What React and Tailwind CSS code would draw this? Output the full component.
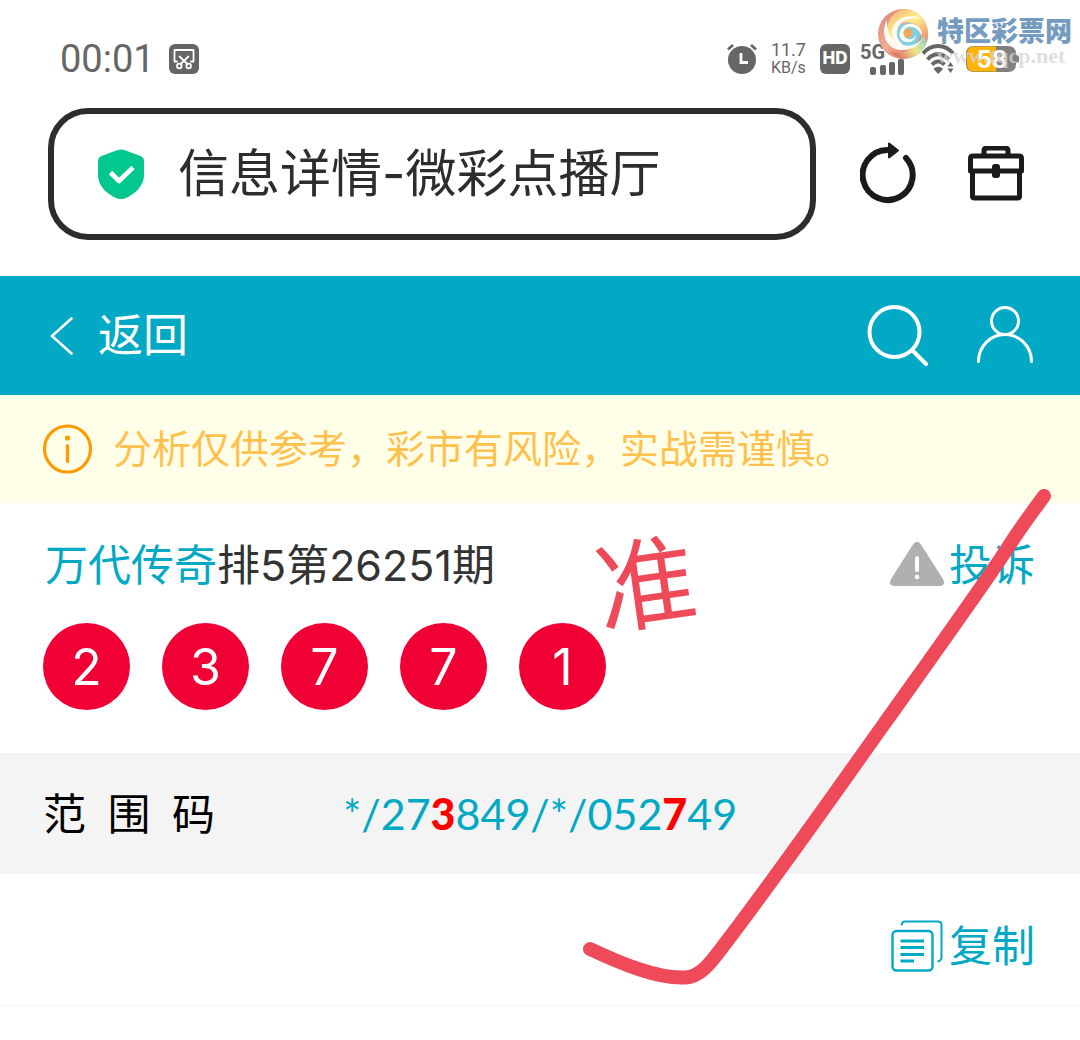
import React from "react";

function ScissorsBadge() {
  return (
    <svg viewBox="0 0 30 30" className="size-[30px]" aria-hidden="true">
      <rect width="30" height="30" rx="6" fill="#666" />
      <g fill="none" stroke="#fff" strokeWidth="1.8" strokeLinecap="round" strokeLinejoin="round">
        <path d="M8 17.500H5.500V6h19v11.500H22" />
        <path d="M10.500 12.500l8 7.500M19.500 12.500l-8 7.500" />
        <circle cx="10.300" cy="22" r="2.300" />
        <circle cx="19.700" cy="22" r="2.300" />
      </g>
    </svg>
  );
}

function AlarmIcon() {
  return (
    <svg viewBox="0 0 30 32" className="h-8 w-[30px]" aria-hidden="true">
      <circle cx="15" cy="17" r="14" fill="#666" />
      <path d="M1 6.500l5-4.500M29 6.500l-5-4.500" stroke="#666" strokeWidth="2.800" />
      <path d="M14 10v9.500h7" fill="none" stroke="#fff" strokeWidth="2.800" />
    </svg>
  );
}

function SignalIcon() {
  return (
    <svg viewBox="0 0 48 34" className="h-[34px] w-12" aria-hidden="true">
      <g fill="#666">
        <text x="0" y="17" fontFamily="Roboto, sans-serif" fontWeight="700" fontSize="20">5G</text>
        <rect x="10" y="25" width="6" height="8" rx="2" />
        <rect x="20" y="23" width="6" height="10" rx="2" />
        <rect x="29" y="20" width="6" height="13" rx="2" />
        <rect x="38" y="17" width="6" height="16" rx="2" />
      </g>
    </svg>
  );
}

function WifiIcon() {
  return (
    <svg viewBox="0 0 34 30" className="h-[30px] w-[34px]" aria-hidden="true">
      <g fill="none" stroke="#666" strokeWidth="3.800">
        <path d="M1 9.500C9-.5 23-.5 31 9.500" />
        <path d="M5.500 15.500c6-7 15-7 21 0" />
        <path d="M10 20.800c4-4.500 8.500-4.500 12.500 0" />
      </g>
      <path d="M11.500 25c3-3 6.500-3 9.500 0L16.200 30z" fill="#666" />
      <path d="M25.500 22.500l3-4.500 3 4.500zM25.500 24.500l3 4.500 3-4.500z" fill="#666" />
    </svg>
  );
}

function BatteryIcon() {
  return (
    <svg viewBox="0 0 54 28" className="h-7 w-[54px]" role="img" aria-label="58%">
      <path d="M8 1h34q8 0 8 8v1h1q2 0 2 2v4q0 2-2 2h-1v1q0 8-8 8H8q-8 0-8-8V9q0-8 8-8z" fill="#808080" />
      <path d="M8 1.500h22v25H8q-7 0-7-7.500V9q0-7.500 7-7.500z" fill="#ffb400" />
      <text x="26" y="23" textAnchor="middle" fontFamily="Inter, sans-serif" fontWeight="700" fontSize="24" fill="#fff">58</text>
    </svg>
  );
}

function OrbLogo() {
  return (
    <svg viewBox="0 0 52 52" className="size-[52px]" aria-hidden="true">
      <defs>
        <linearGradient id="shell" x1="0" y1="0.200" x2="0.700" y2="1">
          <stop offset="0" stopColor="#dd8d80" />
          <stop offset="0.500" stopColor="#f3ab92" />
          <stop offset="1" stopColor="#d97263" />
        </linearGradient>
        <linearGradient id="sun" x1="0.100" y1="0" x2="0.900" y2="1">
          <stop offset="0" stopColor="#f3b07c" />
          <stop offset="0.450" stopColor="#fdf08a" />
          <stop offset="1" stopColor="#ee8268" />
        </linearGradient>
        <linearGradient id="leaf" x1="0" y1="0.500" x2="1" y2="0">
          <stop offset="0" stopColor="#df7562" />
          <stop offset="0.500" stopColor="#ece88b" />
          <stop offset="1" stopColor="#86cdd3" />
        </linearGradient>
      </defs>
      <circle cx="26" cy="26" r="25" fill="url(#shell)" />
      <path d="M13 33C6 20 12 5 27 1c14 0 24 11 24 25 0 4-1 8-2.500 11C47 24 41 14 30 14c-11 0-16 8-13 19z" fill="url(#sun)" />
      <path d="M13 44c12 3 27-3 33-17 3 3 4 8 2 12-7 11-22 16-35 5z" fill="url(#leaf)" />
      <path d="M19 27c0-8 5-12 12-12 8 0 13 6 12 13-1 8-8 12-14 11-6-1-10-6-10-12z" fill="#7ed0e2" />
      <path d="M10 12C2 27 11 44 28 42c8-1 14-5 17-11-5 6-12 8-18 6C15 34 9 24 10 12z" fill="#fffaf2" />
      <path d="M45 11C31 4 16 11 15 24c0 8 6 15 14 15-6-4-10-9-9-15 1-11 13-16 25-13z" fill="#fffaf2" />
      <path d="M45 29c1-11-9-16-17-12-8 5-7 16 2 17 5 1 9-3 9-7-2 4-5 5-8 4-6-2-6-10 0-12 6-1 12 3 14 10z" fill="#fffaf2" />
      <circle cx="31" cy="25" r="4.500" fill="#f3a95c" />
    </svg>
  );
}

function Watermark() {
  return (
    <div className="absolute top-2 right-2 flex gap-2">
      <OrbLogo />
      <div className="flex flex-col">
        <span className="pt-[2px] text-[27px] leading-[44px] font-black text-[#759bbf]">特区彩票网</span>
        <span className="-mt-2 font-['Liberation_Serif',serif] text-[22px] leading-5 font-bold text-[#d4d4d4]/75">www.tqcp.net</span>
      </div>
    </div>
  );
}

function StatusBar() {
  return (
    <div className="relative flex h-[108px] items-center justify-between pt-[10px] pr-[60px] pl-[60px] text-[#666]">
      <div className="flex items-center gap-[14px]">
        <span className="font-['Roboto',sans-serif] text-[38px] leading-10">00:01</span>
        <ScissorsBadge />
      </div>
      <div className="flex items-center gap-[14px]">
        <AlarmIcon />
        <div className="flex flex-col font-['Roboto',sans-serif] leading-[18px]">
          <span className="text-[18px]">11.7</span>
          <span className="text-[16px]">KB/s</span>
        </div>
        <div className="flex items-center gap-[10px]">
          <span className="flex size-[30px] items-center justify-center rounded-md bg-[#666] text-[17px] font-extrabold text-white">HD</span>
          <SignalIcon />
        </div>
        <div className="flex items-center gap-[10px]">
          <WifiIcon />
          <BatteryIcon />
        </div>
      </div>
      <Watermark />
    </div>
  );
}

function BrowserBar() {
  return (
    <div className="flex items-center pr-14 pb-9 pl-12">
      <div className="flex h-[132px] flex-1 items-center gap-[34px] rounded-[40px] border-6 border-[#2d2d2d] pl-11">
        <svg viewBox="0 0 46 50" className="h-[50px] w-[46px] shrink-0" aria-hidden="true">
          <path d="M19 1.200q4-1.600 8 0L42.500 7Q46 8.500 46 12v14c0 11-9 19-18.500 23.200q-4.500 1.700-9 0C9 45 0 37 0 26V12q0-3.500 3.500-5z" fill="#02c78f" />
          <path d="M12.500 23.500l8.500 8.500L35 18.500" fill="none" stroke="#fff" strokeWidth="4.600" strokeLinejoin="round" />
        </svg>
        <input
          aria-label="网址"
          readOnly
          value="信息详情-微彩点播厅"
          className="h-20 w-full min-w-0 flex-1 bg-transparent text-[51px] leading-[80px] text-[#2d2d2d] outline-none"
        />
      </div>
      <button aria-label="刷新" className="ml-11 shrink-0">
        <svg viewBox="0 0 56 64" className="h-16 w-14">
          <path d="M27 8A25 25 0 1 0 46 16" fill="none" stroke="#1b1b1b" strokeWidth="6" strokeLinecap="round" />
          <path d="M29 1.500l9 7-9 7z" fill="#1b1b1b" stroke="#1b1b1b" strokeWidth="2" strokeLinejoin="round" />
        </svg>
      </button>
      <button aria-label="工具箱" className="ml-[52px] shrink-0">
        <svg viewBox="0 0 56 56" className="size-14">
          <g fill="none" stroke="#1b1b1b" strokeWidth="5" strokeLinejoin="round">
            <path d="M16 10V5q0-3 3-3h18q3 0 3 3v5" />
            <path d="M5 10h46q2.500 0 2.500 2.500V25h-51V12.500Q2.500 10 5 10z" />
            <path d="M4.500 25v25.500q0 1.500 2 1.500h43q2 0 2-1.500V25" />
          </g>
          <rect x="24" y="18" width="8" height="14" rx="3" fill="#1b1b1b" />
        </svg>
      </button>
    </div>
  );
}

function Header() {
  return (
    <header className="flex h-[119px] items-center justify-between bg-[#02a9c4] pr-[46px] pl-[50px] text-white">
      <button className="flex items-center gap-6">
        <svg viewBox="0 0 24 38" className="h-[38px] w-6" aria-hidden="true">
          <path d="M21.500 1.500L2 19l19.500 17.500" fill="none" stroke="currentColor" strokeWidth="2.600" strokeLinecap="round" />
        </svg>
        <span className="text-[45px] leading-[60px]">返回</span>
      </button>
      <div className="flex items-center gap-12">
        <button aria-label="搜索">
          <svg viewBox="0 0 62 62" className="size-[62px]">
            <g fill="none" stroke="currentColor" strokeLinecap="round">
              <circle cx="28.500" cy="27" r="25" strokeWidth="4" />
              <path d="M46.500 45.500L60 59" strokeWidth="4" />
            </g>
          </svg>
        </button>
        <button aria-label="个人中心">
          <svg viewBox="0 0 58 60" className="h-[60px] w-[58px]">
            <g fill="none" stroke="currentColor" strokeWidth="3" strokeLinecap="round">
              <circle cx="29" cy="15" r="13.500" />
              <path d="M2.500 55.500a26.500 27 0 0 1 53 0" />
            </g>
          </svg>
        </button>
      </div>
    </header>
  );
}

function Notice() {
  return (
    <div className="flex h-[108px] items-center gap-5 bg-[#fffee8] pl-[43px]">
      <svg viewBox="0 0 50 50" className="size-[50px]" aria-hidden="true">
        <circle cx="24.500" cy="25" r="23" fill="none" stroke="#ff9b00" strokeWidth="3.200" />
        <circle cx="24.500" cy="14" r="2.600" fill="#ff9b00" />
        <path d="M24.500 21.500v16" stroke="#ff9b00" strokeWidth="3.200" strokeLinecap="round" />
      </svg>
      <p className="text-[39px] leading-[56px] text-[#ffc14d]">分析仅供参考，彩市有风险，实战需谨慎。</p>
    </div>
  );
}

function Ball({ children }) {
  return (
    <li className="flex size-[87px] items-center justify-center rounded-full bg-[#f00035] text-[50px] leading-[60px] text-white">
      {children}
    </li>
  );
}

function CheckStroke() {
  return (
    <svg viewBox="580 485 476 505" className="pointer-events-none absolute top-[209px] right-6 h-[505px] w-[476px]" aria-hidden="true">
      <path
        d="M590 949C622 964 658 979 685 977.500C701 977 712 961 724 945C776 877 830 800 884 724C936 651 980 590 1007 549C1020 528 1034 510 1044 496"
        fill="none"
        stroke="#ef4a59"
        strokeWidth="14"
        strokeLinecap="round"
        strokeLinejoin="round"
      />
    </svg>
  );
}

function Article() {
  return (
    <>
      <section className="relative h-[250px] pt-8 pr-[45px] pl-[43px]">
        <div className="flex items-center justify-between">
          <h1 className="pl-[2px] text-[43px] leading-[60px] text-[#333]">
            <a href="#author" className="text-[#02a9c4]">万代传奇</a>排5第26251期
          </h1>
          <button className="flex items-center gap-1 text-[43px] leading-[60px] text-[#02a9c4]">
            <svg viewBox="0 0 56 46" className="h-[46px] w-14" aria-hidden="true">
              <path d="M24 2.500q4-5.500 8 0L54 37q3 6.500-3 7H5q-6-.5-3-7z" fill="#b0b0b0" />
              <path d="M28 16v12" stroke="#fff" strokeWidth="4" strokeLinecap="round" />
              <circle cx="28" cy="35" r="2.300" fill="#fff" />
            </svg>
            投诉
          </button>
        </div>
        <ul className="mt-7 flex gap-8">
          <Ball>2</Ball>
          <Ball>3</Ball>
          <Ball>7</Ball>
          <Ball>7</Ball>
          <Ball>1</Ball>
        </ul>
        <span className="absolute top-8 left-[596px] -rotate-8 text-[100px] leading-[100px] text-[#ef4a59]">准</span>
      </section>
      <section className="flex h-[121px] items-center bg-[#f4f4f4] pl-[43px] text-[43px] leading-[60px]">
        <span className="w-[300px] text-black">范&#8194;围&#8194;码</span>
        <span className="font-['Lato',sans-serif] text-[#02a9c4]">
          */27<b className="font-black text-[#f00]">3</b>849/*/052<b className="font-black text-[#f00]">7</b>49
        </span>
      </section>
      <section className="flex h-[133px] items-center justify-end border-b-3 border-[#fafafa] pt-[14px] pr-[45px]">
        <button className="flex items-center gap-[6px] text-[43px] leading-[60px] text-[#02a9c4]">
          <svg viewBox="0 0 52 52" className="size-[52px]" aria-hidden="true">
            <g fill="none" stroke="currentColor">
              <rect x="1.500" y="11" width="40" height="39.500" rx="4" strokeWidth="2.400" />
              <path d="M10.500 5.500Q11 1.500 14 1.500h33q3.500 0 3.500 3.500v32q0 4-4 4.500" strokeWidth="2" />
              <path d="M9.500 21H33M9.500 27.500H33M9.500 34.500H33M9.500 41H23" strokeWidth="3" />
            </g>
          </svg>
          复制
        </button>
      </section>
    </>
  );
}

export default function App() {
  return (
    <div lang="zh-CN" className="min-h-screen overflow-hidden bg-white font-['Inter','Noto_Sans_CJK_SC',sans-serif]">
      <StatusBar />
      <BrowserBar />
      <main className="relative">
        <Header />
        <Notice />
        <Article />
        <CheckStroke />
      </main>
    </div>
  );
}
